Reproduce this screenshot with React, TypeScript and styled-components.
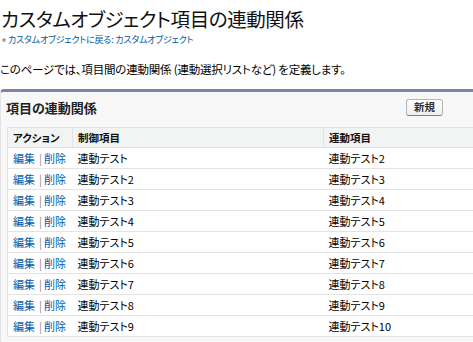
import React from 'react';
import styled, { createGlobalStyle } from 'styled-components';

const GlobalStyle = createGlobalStyle`
  html, body {
    margin: 0;
    padding: 0;
    background: #ffffff;
    overflow: hidden;
  }
  body {
    font-family: 'Noto Sans CJK JP', 'Noto Sans', sans-serif;
    font-feature-settings: 'palt';
    color: #000;
  }
`;

const Page = styled.div`
  padding: 6px 0 0 0;
  width: 600px;
`;

const Title = styled.h1`
  margin: 0 0 0 1px;
  font-size: 19.5px;
  line-height: 26px;
  font-weight: 400;
  letter-spacing: -0.4px;
  color: #111;
`;

const Breadcrumb = styled.div`
  margin: 2px 0 0 2px;
  font-size: 9px;
  line-height: 12px;
  letter-spacing: -0.2px;
  color: #333;
`;

const Link = styled.a`
  color: #015ba7;
  text-decoration: none;
`;

const Description = styled.p`
  margin: 16px 0 0 0;
  font-size: 11.5px;
  line-height: 14px;
  letter-spacing: -0.2px;
`;

const Panel = styled.section`
  margin-top: 13px;
  background: #f8f8f8;
  border-top: 3px solid #7d86a0;
  border-left: 1px solid #e4e4e4;
  border-radius: 4px 0 0 0;
  padding-bottom: 12px;
`;

const PanelHeader = styled.div`
  display: flex;
  align-items: center;
  height: 18px;
  padding: 6px 0 11px 5px;
`;

const PanelTitle = styled.h2`
  margin: 0;
  width: 400px;
  font-size: 13px;
  font-weight: 700;
  color: #222;
`;

const Button = styled.button`
  width: 37px;
  height: 17px;
  padding: 0;
  border: 1px solid #b5b5b5;
  border-bottom-color: #7f7f7f;
  border-radius: 3px;
  background: linear-gradient(#ffffff, #efefef);
  font-family: inherit;
  font-size: 10.5px;
  font-weight: 700;
  color: #333;
  line-height: 14px;
`;

const Table = styled.table`
  margin-left: 6px;
  width: 560px;
  border-collapse: collapse;
  background: #ffffff;
  border-left: 1px solid #e0e3e5;
  table-layout: fixed;
`;

const HeadCell = styled.th<{ w?: number }>`
  box-sizing: border-box;
  width: ${({ w }) => (w ? `${w}px` : 'auto')};
  height: 20px;
  padding: 0 0 0 5px;
  background: #f2f3f3;
  border-top: 1px solid #e0e3e5;
  border-bottom: 1px solid #e0e3e5;
  border-left: 1px solid #e0e3e5;
  text-align: left;
  font-size: 10.5px;
  font-weight: 700;
  color: #111;
  &:first-child {
    border-left: none;
  }
`;

const Cell = styled.td`
  height: 20px;
  padding: 0 0 0 5px;
  border-bottom: 1px solid #e3e3e3;
  font-size: 11px;
  line-height: 14px;
  white-space: nowrap;
`;

const ActionLink = styled(Link)`
  font-size: 11px;
`;

const Sep = styled.span`
  color: #888;
  margin: 0 2px 0 4px;
`;

const rows = Array.from({ length: 9 }, (_, i) => ({
  control: i === 0 ? '連動テスト' : `連動テスト${i + 1}`,
  dependent: `連動テスト${i + 2}`,
}));

export default function App() {
  return (
    <>
      <GlobalStyle />
      <Page>
        <Title>カスタムオブジェクト項目の連動関係</Title>
        <Breadcrumb>
          « <Link href="#">カスタムオブジェクトに戻る: カスタムオブジェクト</Link>
        </Breadcrumb>
        <Description>このページでは、項目間の連動関係 (連動選択リストなど) を定義します。</Description>
        <Panel>
          <PanelHeader>
            <PanelTitle>項目の連動関係</PanelTitle>
            <Button>新規</Button>
          </PanelHeader>
          <Table>
            <thead>
              <tr>
                <HeadCell w={65}>アクション</HeadCell>
                <HeadCell w={251}>制御項目</HeadCell>
                <HeadCell>連動項目</HeadCell>
              </tr>
            </thead>
            <tbody>
              {rows.map((row) => (
                <tr key={row.control}>
                  <Cell>
                    <ActionLink href="#">編集</ActionLink>
                    <Sep>|</Sep>
                    <ActionLink href="#">削除</ActionLink>
                  </Cell>
                  <Cell>{row.control}</Cell>
                  <Cell>{row.dependent}</Cell>
                </tr>
              ))}
            </tbody>
          </Table>
        </Panel>
      </Page>
    </>
  );
}
